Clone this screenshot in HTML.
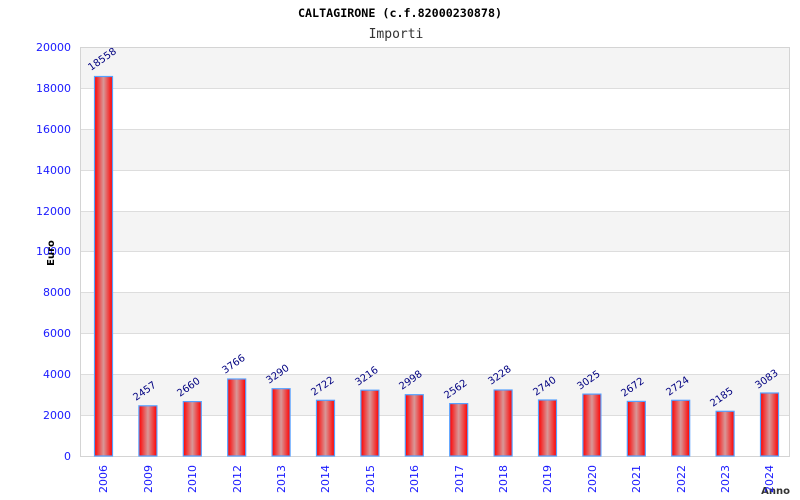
<!DOCTYPE html>
<html><head><style>body{margin:0;background:#fff}svg{display:block}</style></head><body>
<svg width="800" height="500" xmlns="http://www.w3.org/2000/svg">
<defs><linearGradient id="g" x1="0" x2="1" y1="0" y2="0">
<stop offset="0" stop-color="#ff0000"/><stop offset="0.5" stop-color="#d89898"/><stop offset="1" stop-color="#ff0000"/></linearGradient></defs>
<text x="400" y="17" text-anchor="middle" font-family="DejaVu Sans Mono, monospace" font-weight="bold" font-size="11.7">CALTAGIRONE (c.f.82000230878)</text>
<text x="396" y="38" text-anchor="middle" font-family="DejaVu Sans Mono, monospace" font-size="13" fill="#333">Importi</text>
<g fill="#f4f4f4">
<rect x="80" y="47" width="710" height="41"/><rect x="80" y="129" width="710" height="41"/><rect x="80" y="211" width="710" height="41"/><rect x="80" y="292" width="710" height="41"/><rect x="80" y="374" width="710" height="41"/></g>
<g stroke="#ddd" stroke-width="1">
<line x1="80" x2="790" y1="88.5" y2="88.5"/><line x1="80" x2="790" y1="129.5" y2="129.5"/><line x1="80" x2="790" y1="170.5" y2="170.5"/><line x1="80" x2="790" y1="211.5" y2="211.5"/><line x1="80" x2="790" y1="251.5" y2="251.5"/><line x1="80" x2="790" y1="292.5" y2="292.5"/><line x1="80" x2="790" y1="333.5" y2="333.5"/><line x1="80" x2="790" y1="374.5" y2="374.5"/><line x1="80" x2="790" y1="415.5" y2="415.5"/>
</g>
<rect x="80.5" y="47.5" width="709" height="409" fill="none" stroke="#d4d4d4"/>
<g font-family="DejaVu Sans, sans-serif" font-size="11" fill="#1a1aff" text-anchor="end">
<text x="71" y="51">20000</text><text x="71" y="92">18000</text><text x="71" y="133">16000</text><text x="71" y="174">14000</text><text x="71" y="215">12000</text><text x="71" y="255">10000</text><text x="71" y="296">8000</text><text x="71" y="337">6000</text><text x="71" y="378">4000</text><text x="71" y="419">2000</text><text x="71" y="460">0</text>
</g>
<text transform="translate(54,253) rotate(-90)" text-anchor="middle" font-family="DejaVu Sans, sans-serif" font-weight="bold" font-size="10">Euro</text>
<text x="790" y="494" text-anchor="end" font-family="DejaVu Sans, sans-serif" font-weight="bold" font-size="10" fill="#333">Anno</text>
<g stroke="#55a0ff" stroke-width="1.2" fill="url(#g)">
<rect x="94.5" y="76.5" width="18" height="379.5"/>
<rect x="138.9" y="405.8" width="18" height="50.2"/>
<rect x="183.3" y="401.6" width="18" height="54.4"/>
<rect x="227.7" y="379" width="18" height="77"/>
<rect x="272.1" y="388.7" width="18" height="67.3"/>
<rect x="316.5" y="400.3" width="18" height="55.7"/>
<rect x="360.9" y="390.2" width="18" height="65.8"/>
<rect x="405.3" y="394.7" width="18" height="61.3"/>
<rect x="449.7" y="403.6" width="18" height="52.4"/>
<rect x="494.1" y="390" width="18" height="66"/>
<rect x="538.5" y="400" width="18" height="56"/>
<rect x="582.9" y="394.1" width="18" height="61.9"/>
<rect x="627.3" y="401.4" width="18" height="54.6"/>
<rect x="671.7" y="400.3" width="18" height="55.7"/>
<rect x="716.1" y="411.3" width="18" height="44.7"/>
<rect x="760.5" y="393" width="18" height="63"/>
</g>
<g font-family="DejaVu Sans, sans-serif" font-size="10" fill="#000080">
<text transform="translate(91,71) rotate(-35)">18558</text>
<text transform="translate(136,401) rotate(-35)">2457</text>
<text transform="translate(180,397) rotate(-35)">2660</text>
<text transform="translate(225,374) rotate(-35)">3766</text>
<text transform="translate(269,384) rotate(-35)">3290</text>
<text transform="translate(314,396) rotate(-35)">2722</text>
<text transform="translate(358,386) rotate(-35)">3216</text>
<text transform="translate(402,390) rotate(-35)">2998</text>
<text transform="translate(447,399) rotate(-35)">2562</text>
<text transform="translate(491,385) rotate(-35)">3228</text>
<text transform="translate(536,396) rotate(-35)">2740</text>
<text transform="translate(580,390) rotate(-35)">3025</text>
<text transform="translate(624,397) rotate(-35)">2672</text>
<text transform="translate(669,396) rotate(-35)">2724</text>
<text transform="translate(713,407) rotate(-35)">2185</text>
<text transform="translate(758,389) rotate(-35)">3083</text>
</g>
<g font-family="DejaVu Sans, sans-serif" font-size="11" fill="#1a1aff" text-anchor="end">
<text transform="translate(107,465) rotate(-90)">2006</text>
<text transform="translate(152,465) rotate(-90)">2009</text>
<text transform="translate(196,465) rotate(-90)">2010</text>
<text transform="translate(241,465) rotate(-90)">2012</text>
<text transform="translate(285,465) rotate(-90)">2013</text>
<text transform="translate(329,465) rotate(-90)">2014</text>
<text transform="translate(374,465) rotate(-90)">2015</text>
<text transform="translate(418,465) rotate(-90)">2016</text>
<text transform="translate(463,465) rotate(-90)">2017</text>
<text transform="translate(507,465) rotate(-90)">2018</text>
<text transform="translate(551,465) rotate(-90)">2019</text>
<text transform="translate(596,465) rotate(-90)">2020</text>
<text transform="translate(640,465) rotate(-90)">2021</text>
<text transform="translate(685,465) rotate(-90)">2022</text>
<text transform="translate(729,465) rotate(-90)">2023</text>
<text transform="translate(773,465) rotate(-90)">2024</text>
</g>
</svg>
</body></html>
